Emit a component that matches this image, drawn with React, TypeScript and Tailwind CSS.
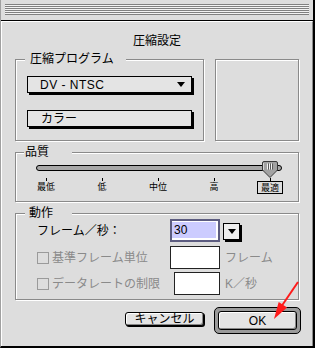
import type { ReactNode } from "react";

function Group({
  label,
  labelClass,
  className,
  children,
}: {
  label: string;
  labelClass: string;
  className: string;
  children: ReactNode;
}) {
  return (
    <div
      className={`relative border border-[#8a8a8a] shadow-[inset_1px_1px_0_#fff,1px_1px_0_#fff] ${className}`}
    >
      <span className={`absolute top-[-9px] h-[16px] bg-[#dddddd] ${labelClass}`}>{label}</span>
      {children}
    </div>
  );
}

function Triangle() {
  return (
    <svg width="8" height="5" viewBox="0 0 8 5">
      <path d="M0 0H8L4 5Z" fill="#000" />
    </svg>
  );
}

function Thumb() {
  return (
    <svg width="16" height="17" viewBox="0 0 16 17">
      <path
        d="M0.5 2 Q0.5 0.5 2 0.5 H14 Q15.5 0.5 15.5 2 V9 L8 16.5 L0.5 9 Z"
        fill="#a2a2a2"
        stroke="#3a3a3a"
      />
      <path d="M1.5 2 V9" stroke="#d8d8d8" />
      <path d="M5.5 2.5 V8.5 M7.5 2.5 V8.5 M9.5 2.5 V8.5" stroke="#f4f4f4" />
      <path d="M6.5 2.5 V8.5 M8.5 2.5 V8.5 M10.5 2.5 V8.5" stroke="#5a5a5a" />
    </svg>
  );
}

const ticks = ["最低", "低", "中位", "高", "最適"];

export default function App() {
  return (
    <div className="relative w-[315px] h-[348px] bg-[#dddddd] border-l border-l-[#a0a0a0] border-r-2 border-r-black border-b-2 border-b-black flex flex-col font-['Liberation_Sans','Noto_Sans_CJK_JP',sans-serif] text-[12px] leading-[16px] text-black">
      {/* title bar */}
      <div className="h-[21px] border-b border-black px-[4px] pt-[4px]">
        <div className="flex flex-col gap-px bg-[#f2f2f2]">
          <div className="h-px bg-[#808080]" />
          <div className="h-px bg-[#808080]" />
          <div className="h-px bg-[#808080]" />
          <div className="h-px bg-[#808080]" />
          <div className="h-px bg-[#808080]" />
          <div className="h-px bg-[#808080]" />
        </div>
      </div>

      <div className="flex-1 flex flex-col border-t border-l border-t-white border-l-white border-r border-r-[#8a8a8a] px-[13px]">
        <div className="mt-[11px] text-center">圧縮設定</div>

        {/* program */}
        <div className="mt-[10px] flex gap-[11px]">
          <Group
            label="圧縮プログラム"
            labelClass="left-[9px] w-[101px] pl-[5px]"
            className="w-[189px] h-[82px] pt-[16px] px-[11px]"
          >
            <div className="h-[17px] border border-black bg-[#e4e4e4] shadow-[2px_2px_0_#000] flex items-center justify-between pl-[12px] pr-[6px] tracking-[0.5px]">
              <span>DV - NTSC</span>
              <Triangle />
            </div>
            <div className="mt-[17px] h-[17px] border border-black bg-[#e4e4e4] shadow-[2px_2px_0_#000] flex items-center pl-[13px]">
              カラー
            </div>
          </Group>
          <div className="w-[84px] h-[82px] border border-[#8a8a8a] shadow-[inset_1px_1px_0_#fff,1px_1px_0_#fff]" />
        </div>

        {/* quality */}
        <Group
          label="品質"
          labelClass="left-[8px] w-[48px] pl-[1px]"
          className="mt-[11px] h-[50px] pt-[12px]"
        >
          <div className="relative ml-[20px] w-[246px] h-[6px] rounded-full border border-black bg-[#a8a8a8]">
            <div className="absolute left-[225px] top-[-5px]">
              <Thumb />
            </div>
          </div>
          <div className="mt-[7px] ml-[2px] flex">
            {ticks.map((t, i) => (
              <div key={t} className="w-[56px] flex flex-col items-center">
                <div className="w-px h-[3px] bg-black" />
                <div
                  className={`h-[13px] leading-[13px] text-[9px] ${
                    i === 4 ? "border border-black px-[3px] leading-[11px]" : ""
                  }`}
                >
                  {t}
                </div>
              </div>
            ))}
          </div>
        </Group>

        {/* action */}
        <Group
          label="動作"
          labelClass="left-[9px] w-[47px] pl-[4px]"
          className="mt-[11px] h-[87px] pt-[5px] pl-[21px]"
        >
          <div className="flex items-center h-[23px]">
            <span className="w-[133px]">フレーム／秒：</span>
            <div className="w-[50px] h-[23px] border-2 border-[#5c5c80] bg-white pt-[1px]">
              <div className="w-[44px] h-[16px] bg-[#ccccff] pl-[2px] leading-[16px]">30</div>
            </div>
            <div className="ml-[3px] mt-[2px] w-[17px] h-[17px] border border-black bg-[#eeeeee] shadow-[2px_2px_0_#000] flex items-center justify-center">
              <Triangle />
            </div>
          </div>

          <div className="mt-[4px] flex items-center h-[23px] text-[#8a8a8a]">
            <div className="w-[133px] flex items-center">
              <span className="w-[12px] h-[12px] border border-[#9a9a9a]" />
              <span className="ml-[3px]">基準フレーム単位</span>
            </div>
            <div className="w-[50px] h-[23px] border border-[#222] bg-white" />
            <span className="ml-[5px]">フレーム</span>
          </div>

          <div className="mt-[3px] flex items-center h-[23px] text-[#8a8a8a]">
            <div className="w-[137px] flex items-center">
              <span className="w-[12px] h-[12px] border border-[#9a9a9a]" />
              <span className="ml-[3px]">データレートの制限</span>
            </div>
            <div className="w-[46px] h-[23px] border border-[#222] bg-white" />
            <span className="ml-[5px]">K／秒</span>
          </div>
        </Group>

        {/* buttons */}
        <div className="mt-[7px] flex justify-end gap-[10px] mr-[-2px]">
          <div className="mt-[5px] w-[79px] h-[14px] rounded-[3px] border border-black bg-[#e4e4e4] shadow-[inset_1px_1px_0_#fff,inset_-1px_-1px_0_#888,1px_1px_0_#000] flex items-center justify-center">
            キャンセル
          </div>
          <div className="w-[87px] h-[27px] rounded-[5px] border border-black bg-[#9a9a9a] p-[3px]">
            <div className="h-full rounded-[3px] border border-black bg-[#e4e4e4] shadow-[inset_1px_1px_0_#fff,inset_-1px_-1px_0_#888] flex items-center justify-center">
              OK
            </div>
          </div>
        </div>
      </div>

      {/* red arrow annotation */}
      <svg
        className="absolute left-[-1px] top-0 pointer-events-none"
        width="315"
        height="348"
        viewBox="0 0 315 348"
      >
        <path d="M298 282 L281 307" stroke="#ff1a1a" strokeWidth="2" />
        <path d="M274 319 L278.7 301.9 L287.1 307.5 Z" fill="#ff1a1a" />
      </svg>
    </div>
  );
}
